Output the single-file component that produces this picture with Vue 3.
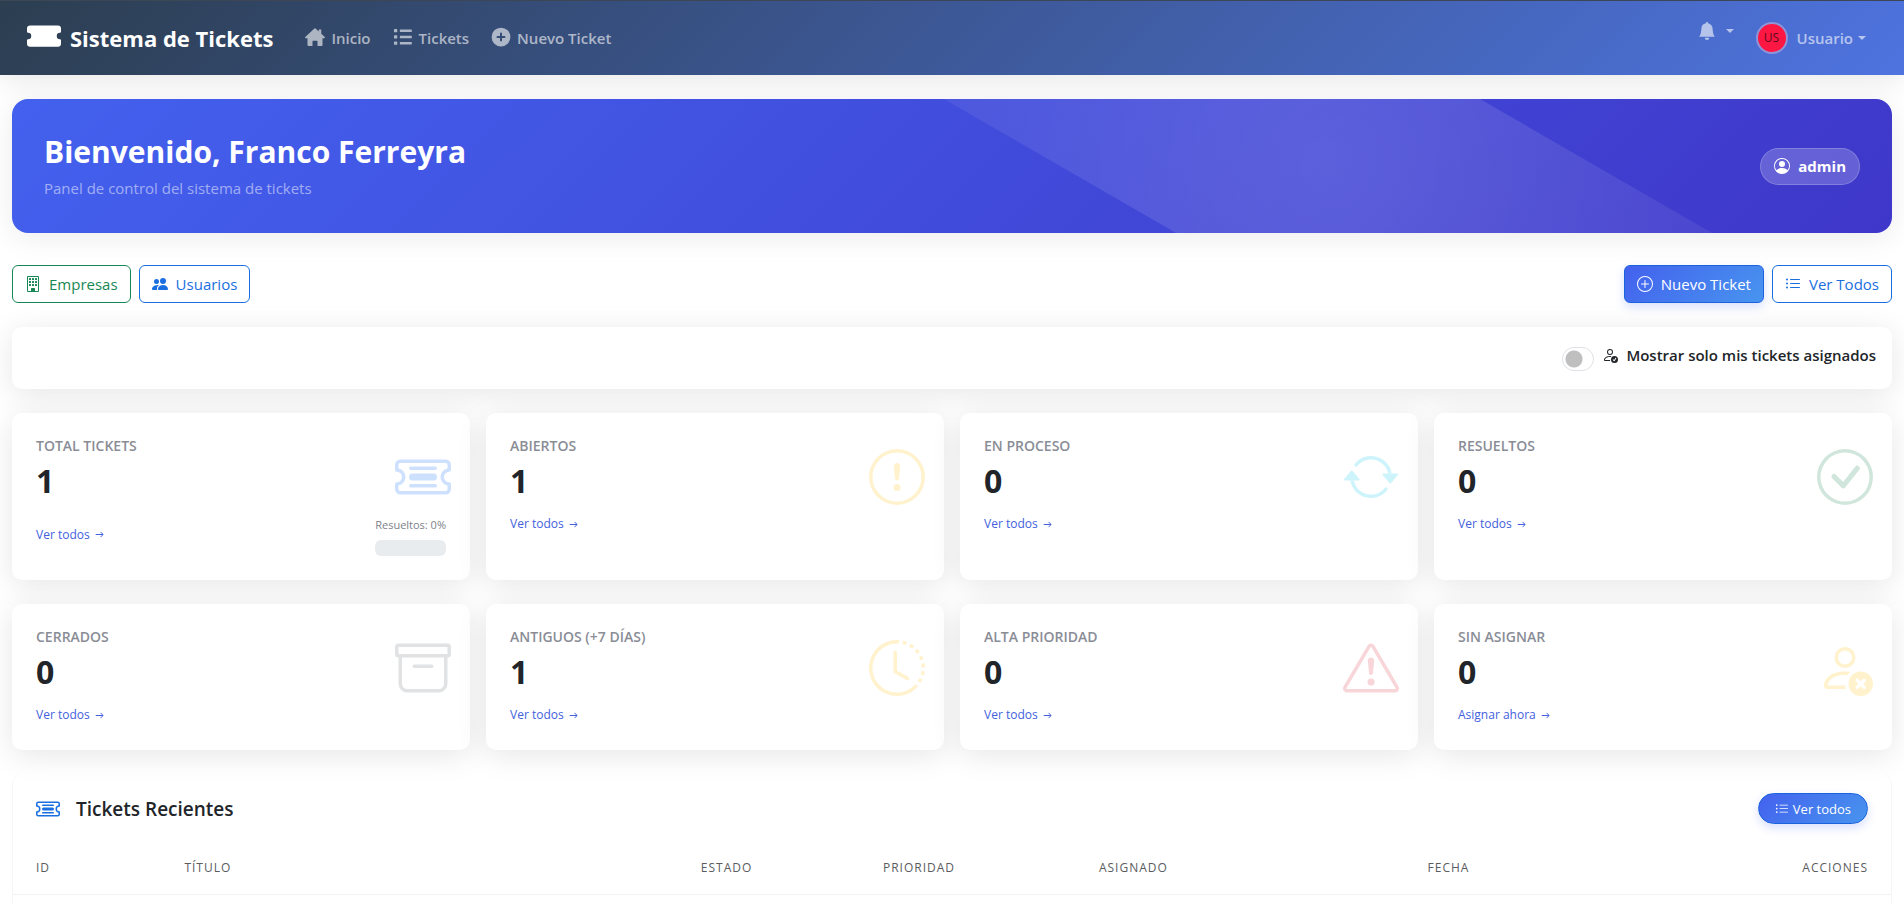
<script setup>
import { h, ref } from 'vue'

const onlyMine = ref(false)

const paths = {
  ticketFill: ['M1.5 3A1.5 1.5 0 0 0 0 4.5V6a.5.5 0 0 0 .5.5 1.5 1.5 0 1 1 0 3 .5.5 0 0 0-.5.5v1.5A1.5 1.5 0 0 0 1.5 13h13a1.5 1.5 0 0 0 1.5-1.5V10a.5.5 0 0 0-.5-.5 1.5 1.5 0 0 1 0-3A.5.5 0 0 0 16 6V4.5A1.5 1.5 0 0 0 14.5 3z'],
  house: ['M7.300 1.300a1 1 0 0 1 1.400 0L11 3.500V2h2v3.400l2.800 2.600a.6.6 0 0 1-.4 1H14v5.300a.8.8 0 0 1-.8.8h-3.200v-3.700a.5.5 0 0 0-.5-.5h-3a.5.5 0 0 0-.5.5v3.700H2.800a.8.8 0 0 1-.8-.8V9H.6a.6.6 0 0 1-.4-1z'],
  listBold: ['M1.300 1.600h1.600a.5.5 0 0 1 .5.5v1.600a.5.5 0 0 1-.5.5H1.300a.5.5 0 0 1-.5-.5V2.100a.5.5 0 0 1 .5-.5M5.500 2h9.500v2H5.500zM1.300 6.600h1.600a.5.5 0 0 1 .5.5v1.600a.5.5 0 0 1-.5.5H1.300a.5.5 0 0 1-.5-.5V7.100a.5.5 0 0 1 .5-.5M5.500 7h9.500v2H5.500zM1.300 11.600h1.600a.5.5 0 0 1 .5.5v1.600a.5.5 0 0 1-.5.5H1.300a.5.5 0 0 1-.5-.5v-1.600a.5.5 0 0 1 .5-.5M5.500 12h9.500v2H5.500z'],
  plusFill: ['M15.500 8A7.500 7.500 0 1 1 .5 8a7.500 7.500 0 0 1 15 0M8.800 5.200a.8.8 0 0 0-1.600 0v2h-2a.8.8 0 0 0 0 1.600h2v2a.8.8 0 0 0 1.600 0v-2h2a.8.8 0 0 0 0-1.600h-2z'],
  bell: ['M8 16a2 2 0 0 0 2-2H6a2 2 0 0 0 2 2m.995-14.901a1 1 0 1 0-1.990 0A5 5 0 0 0 3 6c0 1.098-.5 6-2 7h14c-1.500-1-2-5.902-2-7 0-2.420-1.720-4.440-4.005-4.901'],
  personCircle: ['M11 6a3 3 0 1 1-6 0 3 3 0 0 1 6 0', 'M0 8a8 8 0 1 1 16 0A8 8 0 0 1 0 8m8-7a7 7 0 0 0-5.468 11.370C3.242 11.226 4.805 10 8 10s4.757 1.225 5.468 2.370A7 7 0 0 0 8 1'],
  building: ['M4 2.500a.5.5 0 0 1 .5-.5h1a.5.5 0 0 1 .5.5v1a.5.5 0 0 1-.5.5h-1a.5.5 0 0 1-.5-.5zm3 0a.5.5 0 0 1 .5-.5h1a.5.5 0 0 1 .5.5v1a.5.5 0 0 1-.5.5h-1a.5.5 0 0 1-.5-.5zm3.500-.5a.5.5 0 0 0-.5.5v1a.5.5 0 0 0 .5.5h1a.5.5 0 0 0 .5-.5v-1a.5.5 0 0 0-.5-.5zM4 5.500a.5.5 0 0 1 .5-.5h1a.5.5 0 0 1 .5.5v1a.5.5 0 0 1-.5.5h-1a.5.5 0 0 1-.5-.5zM7.500 5a.5.5 0 0 0-.5.5v1a.5.5 0 0 0 .5.5h1a.5.5 0 0 0 .5-.5v-1a.5.5 0 0 0-.5-.5zm2.500.5a.5.5 0 0 1 .5-.5h1a.5.5 0 0 1 .5.5v1a.5.5 0 0 1-.5.5h-1a.5.5 0 0 1-.5-.5zM4.500 8a.5.5 0 0 0-.5.5v1a.5.5 0 0 0 .5.5h1a.5.5 0 0 0 .5-.5v-1a.5.5 0 0 0-.5-.5zm2.500.5a.5.5 0 0 1 .5-.5h1a.5.5 0 0 1 .5.5v1a.5.5 0 0 1-.5.5h-1a.5.5 0 0 1-.5-.5zm3.500-.5a.5.5 0 0 0-.5.5v1a.5.5 0 0 0 .5.5h1a.5.5 0 0 0 .5-.5v-1a.5.5 0 0 0-.5-.5z', 'M2 1a1 1 0 0 1 1-1h10a1 1 0 0 1 1 1v14a1 1 0 0 1-1 1H3a1 1 0 0 1-1-1zm11 0H3v14h3v-2.500a.5.5 0 0 1 .5-.5h3a.5.5 0 0 1 .5.5V15h3z'],
  people: ['M1 14s-1 0-1-1 1-4 6-4q.7 0 1.300.1C5.500 10 5 11.700 5 13c0 .4.100.7.300 1zM4.500 8a2.500 2.500 0 1 0 0-5 2.500 2.500 0 0 0 0 5', 'M7 14s-1 0-1-1 1-4 5-4 5 3 5 4-1 1-1 1zm4-6a3 3 0 1 0 0-6 3 3 0 0 0 0 6'],
  plusCircle: ['M8 15A7 7 0 1 1 8 1a7 7 0 0 1 0 14m0 1A8 8 0 1 0 8 0a8 8 0 0 0 0 16', 'M8 4a.5.5 0 0 1 .5.5v3h3a.5.5 0 0 1 0 1h-3v3a.5.5 0 0 1-1 0v-3h-3a.5.5 0 0 1 0-1h3v-3A.5.5 0 0 1 8 4'],
  list: ['M5 11.500a.5.5 0 0 1 .5-.5h9a.5.5 0 0 1 0 1h-9a.5.5 0 0 1-.5-.5m0-4a.5.5 0 0 1 .5-.5h9a.5.5 0 0 1 0 1h-9a.5.5 0 0 1-.5-.5m0-4a.5.5 0 0 1 .5-.5h9a.5.5 0 0 1 0 1h-9a.5.5 0 0 1-.5-.5m-3 1a1 1 0 1 0 0-2 1 1 0 0 0 0 2m0 4a1 1 0 1 0 0-2 1 1 0 0 0 0 2m0 4a1 1 0 1 0 0-2 1 1 0 0 0 0 2'],
  personCheck: ['M12.500 16a3.500 3.500 0 1 0 0-7 3.500 3.500 0 0 0 0 7m1.679-4.493-1.335 2.226a.75.75 0 0 1-1.174.144l-.774-.773a.5.5 0 0 1 .708-.708l.547.548 1.170-1.951a.5.5 0 1 1 .858.514M11 5a3 3 0 1 1-6 0 3 3 0 0 1 6 0M8 7a2 2 0 1 0 0-4 2 2 0 0 0 0 4', 'M8.256 14a4.500 4.500 0 0 1-.229-1.004H3c.001-.246.154-.986.832-1.664C4.484 10.680 5.711 10 8 10q.39 0 .74.025c.226-.341.496-.65.804-.918Q8.844 9.002 8 9c-5 0-6 3-6 4s1 1 1 1z'],
  personX: ['M11 5a3 3 0 1 1-6 0 3 3 0 0 1 6 0M8 7a2 2 0 1 0 0-4 2 2 0 0 0 0 4m.256 7a4.500 4.500 0 0 1-.229-1.004H3c.001-.246.154-.986.832-1.664C4.484 10.680 5.711 10 8 10q.39 0 .74.025c.226-.341.496-.65.804-.918Q8.844 9.002 8 9c-5 0-6 3-6 4s1 1 1 1z', 'M12.500 16a3.500 3.500 0 1 0 0-7 3.500 3.500 0 0 0 0 7m-.646-4.854.646.647.646-.647a.5.5 0 0 1 .708.708l-.647.646.647.646a.5.5 0 0 1-.708.708l-.646-.647-.646.647a.5.5 0 0 1-.708-.708l.647-.646-.647-.646a.5.5 0 0 1 .708-.708'],
  ticket: ['M4 5.500a.5.5 0 0 1 .5-.5h7a.5.5 0 0 1 0 1h-7a.5.5 0 0 1-.5-.5m0 5a.5.5 0 0 1 .5-.5h7a.5.5 0 0 1 0 1h-7a.5.5 0 0 1-.5-.5M5 7a1 1 0 0 0 0 2h6a1 1 0 1 0 0-2z', 'M0 4.500A1.500 1.500 0 0 1 1.500 3h13A1.500 1.500 0 0 1 16 4.500V6a.5.5 0 0 1-.5.5 1.500 1.500 0 0 0 0 3 .5.5 0 0 1 .5.5v1.500a1.500 1.500 0 0 1-1.500 1.500h-13A1.500 1.500 0 0 1 0 11.500V10a.5.5 0 0 1 .5-.5 1.500 1.500 0 1 0 0-3A.5.5 0 0 1 0 6zM1.500 4a.5.5 0 0 0-.5.5v1.050a2.500 2.500 0 0 1 0 4.900v1.050a.5.5 0 0 0 .5.5h13a.5.5 0 0 0 .5-.5v-1.050a2.500 2.500 0 0 1 0-4.900V4.500a.5.5 0 0 0-.5-.5z'],
  exclCircle: ['M8 15A7 7 0 1 1 8 1a7 7 0 0 1 0 14m0 1A8 8 0 1 0 8 0a8 8 0 0 0 0 16', 'M7.002 11a1 1 0 1 1 2 0 1 1 0 0 1-2 0M7.100 4.995a.905.905 0 1 1 1.800 0l-.35 3.507a.552.552 0 0 1-1.100 0z'],
  repeat: ['M11.534 7h3.932a.25.25 0 0 1 .192.410l-1.966 2.360a.25.25 0 0 1-.384 0l-1.966-2.360a.25.25 0 0 1 .192-.410m-11 2h3.932a.25.25 0 0 0 .192-.410L2.692 6.230a.25.25 0 0 0-.384 0L.342 8.590A.25.25 0 0 0 .534 9', 'M8 3c-1.552 0-2.940.707-3.857 1.818a.5.5 0 1 1-.771-.636A6.002 6.002 0 0 1 13.917 7H12.900A5 5 0 0 0 8 3M3.100 9a5.002 5.002 0 0 0 8.757 2.182.5.5 0 1 1 .771.636A6.002 6.002 0 0 1 2.083 9z'],
  checkCircle: ['M8 15A7 7 0 1 1 8 1a7 7 0 0 1 0 14m0 1A8 8 0 1 0 8 0a8 8 0 0 0 0 16', 'm10.970 4.970-.02.022-3.473 4.425-2.093-2.094a.75.75 0 0 0-1.060 1.060L6.970 11.030a.75.75 0 0 0 1.079-.02l3.992-4.990a.75.75 0 0 0-1.071-1.050'],
  archive: ['M0 2a1 1 0 0 1 1-1h14a1 1 0 0 1 1 1v2a1 1 0 0 1-1 1v7.500a2.500 2.500 0 0 1-2.500 2.500h-9A2.500 2.500 0 0 1 1 12.500V5a1 1 0 0 1-1-1zm2 3v7.500A1.500 1.500 0 0 0 3.500 14h9a1.500 1.500 0 0 0 1.500-1.500V5zm13-3H1v2h14zM5 7.500a.5.5 0 0 1 .5-.5h5a.5.5 0 0 1 0 1h-5a.5.5 0 0 1-.5-.5'],
  clock: ['M8.515 1.019A7 7 0 0 0 8 1V0a8 8 0 0 1 .589.022zm2.004.450a7 7 0 0 0-.985-.299l.219-.976q.576.129 1.126.342zm1.370.710a7 7 0 0 0-.439-.270l.493-.870a8 8 0 0 1 .979.654l-.615.789a7 7 0 0 0-.418-.302zm1.834 1.790a7 7 0 0 0-.653-.796l.724-.690q.406.429.747.910zm.744 1.352a7 7 0 0 0-.214-.468l.893-.450a8 8 0 0 1 .450 1.088l-.950.313a7 7 0 0 0-.179-.483m.530 2.507a7 7 0 0 0-.100-1.025l.985-.170q.100.580.116 1.170zm-.131 1.538q.050-.254.081-.510l.993.123a8 8 0 0 1-.230 1.155l-.964-.267q.069-.247.120-.501m-.952 2.379q.276-.436.486-.908l.914.405q-.240.540-.555 1.038zm-.964 1.205q.183-.183.350-.378l.758.653a8 8 0 0 1-.401.432z', 'M8 1a7 7 0 1 0 4.950 11.950l.707.707A8.001 8.001 0 1 1 8 0z', 'M7.500 3a.5.5 0 0 1 .5.5v5.210l3.248 1.856a.5.5 0 0 1-.496.868l-3.500-2A.5.5 0 0 1 7 9V3.500a.5.5 0 0 1 .5-.5'],
  triangle: ['M7.938 2.016A.13.13 0 0 1 8.002 2a.13.13 0 0 1 .063.016.15.15 0 0 1 .054.057l6.857 11.667c.036.060.035.124.002.183a.2.2 0 0 1-.054.060.1.1 0 0 1-.066.017H1.146a.1.1 0 0 1-.066-.017.2.2 0 0 1-.054-.060.18.18 0 0 1 .002-.183L7.884 2.073a.15.15 0 0 1 .054-.057m1.044-.450a1.130 1.130 0 0 0-1.960 0L.165 13.233c-.457.778.091 1.767.980 1.767h13.713c.889 0 1.438-.990.980-1.767z', 'M7.002 12a1 1 0 1 1 2 0 1 1 0 0 1-2 0M7.100 5.995a.905.905 0 1 1 1.800 0l-.35 3.507a.552.552 0 0 1-1.100 0z'],
  arrow: ['M1 8a.7.7 0 0 1 .7-.7h11l-2.900-2.900a.7.7 0 0 1 1-1l4.100 4.100a.7.7 0 0 1 0 1l-4.100 4.100a.7.7 0 0 1-1-1l2.900-2.900h-11A.7.7 0 0 1 1 8']
}

const Icon = (props) =>
  h('svg', { viewBox: '0 0 16 16', fill: 'currentColor', 'fill-rule': 'evenodd', 'aria-hidden': 'true' },
    paths[props.name].map((d) => h('path', { d })))
Icon.props = ['name']

const stats = [
  { label: 'Total Tickets', value: 1, link: 'Ver todos', icon: 'ticket', tone: 'blue', solved: 0 },
  { label: 'Abiertos', value: 1, link: 'Ver todos', icon: 'exclCircle', tone: 'yellow' },
  { label: 'En Proceso', value: 0, link: 'Ver todos', icon: 'repeat', tone: 'cyan' },
  { label: 'Resueltos', value: 0, link: 'Ver todos', icon: 'checkCircle', tone: 'green' },
  { label: 'Cerrados', value: 0, link: 'Ver todos', icon: 'archive', tone: 'gray' },
  { label: 'Antiguos (+7 días)', value: 1, link: 'Ver todos', icon: 'clock', tone: 'yellow' },
  { label: 'Alta Prioridad', value: 0, link: 'Ver todos', icon: 'triangle', tone: 'red' },
  { label: 'Sin Asignar', value: 0, link: 'Asignar ahora', icon: 'personX', tone: 'yellow' }
]
</script>

<template>
  <div class="page">
    <header class="navbar">
      <a href="#" class="brand"><Icon name="ticketFill" class="brand-icon" /><span>Sistema de Tickets</span></a>
      <nav class="links">
        <a href="#"><Icon name="house" class="nav-icon" />Inicio</a>
        <a href="#"><Icon name="listBold" class="nav-icon" />Tickets</a>
        <a href="#"><Icon name="plusFill" class="nav-icon" />Nuevo Ticket</a>
      </nav>
      <button type="button" class="bell" aria-label="Notificaciones"><Icon name="bell" class="bell-icon" /><i class="caret"></i></button>
      <button type="button" class="user"><span class="avatar">US</span><span>Usuario</span><i class="caret"></i></button>
    </header>

    <main class="content">
      <section class="hero">
        <div class="hero-text">
          <h1>Bienvenido, Franco Ferreyra</h1>
          <p>Panel de control del sistema de tickets</p>
        </div>
        <span class="role"><Icon name="personCircle" class="icon" />admin</span>
      </section>

      <div class="actions">
        <a href="#" class="btn outline-green"><Icon name="building" class="icon" />Empresas</a>
        <a href="#" class="btn outline-blue"><Icon name="people" class="icon" />Usuarios</a>
        <span class="spacer"></span>
        <a href="#" class="btn primary"><Icon name="plusCircle" class="icon" />Nuevo Ticket</a>
        <a href="#" class="btn outline-blue"><Icon name="list" class="icon" />Ver Todos</a>
      </div>

      <section class="card filter">
        <input id="only-mine" v-model="onlyMine" type="checkbox" role="switch" class="switch">
        <label for="only-mine"><Icon name="personCheck" class="icon" />Mostrar solo mis tickets asignados</label>
      </section>

      <section class="stats">
        <article v-for="s in stats" :key="s.label" class="card stat">
          <h2>{{ s.label }}</h2>
          <p class="value">{{ s.value }}</p>
          <div class="stat-foot">
            <a href="#">{{ s.link }}<Icon name="arrow" class="arrow" /></a>
            <div v-if="s.solved !== undefined" class="solved">
              <small>Resueltos: {{ s.solved }}%</small>
              <div class="bar"><div class="bar-fill" :style="{ width: s.solved + '%' }"></div></div>
            </div>
          </div>
          <Icon :name="s.icon" class="stat-icon" :class="s.tone" />
        </article>
      </section>

      <section class="recent">
        <div class="recent-head">
          <Icon name="ticket" class="recent-icon" />
          <h2>Tickets Recientes</h2>
          <a href="#" class="pill"><Icon name="list" class="pill-icon" />Ver todos</a>
        </div>
        <table>
          <thead>
            <tr>
              <th class="c-id">ID</th>
              <th class="c-title">Título</th>
              <th class="c-state">Estado</th>
              <th class="c-prio">Prioridad</th>
              <th class="c-user">Asignado</th>
              <th class="c-date">Fecha</th>
              <th class="c-actions">Acciones</th>
            </tr>
          </thead>
        </table>
      </section>
    </main>
  </div>
</template>

<style>
body { margin: 0; background: #fff; }
</style>

<style scoped>
* { box-sizing: border-box; }
.page {
  min-height: 100vh;
  display: flex;
  flex-direction: column;
  font-family: "Open Sans", "Noto Sans", sans-serif;
  font-size: 15px;
  line-height: 24px;
  color: #212529;
}
h1, h2, p { margin: 0; }
a { text-decoration: none; color: inherit; }
svg { flex: none; display: block; }
.icon { width: 16px; height: 16px; }

.navbar {
  height: 75px;
  padding: 0 38px 0 27px;
  display: flex;
  align-items: center;
  border-top: 1px solid #3d4654;
  background: linear-gradient(135deg, #2c3e50, #4e73df);
  box-shadow: 0 4px 30px rgba(0, 0, 0, .1);
  color: #fff;
}
.brand { display: flex; align-items: center; gap: 9px; font-size: 22px; font-weight: 700; }
.brand-icon { width: 34px; height: 34px; margin-bottom: 4px; }
.links { display: flex; gap: 22px; margin-left: 32px; flex: 1; font-weight: 600; color: rgba(255, 255, 255, .6); }
.links a { display: flex; align-items: center; gap: 6px; }
.nav-icon { width: 20px; height: 20px; margin-bottom: 2px; }
.navbar button { border: 0; padding: 0; background: none; font: inherit; font-weight: 600; color: rgba(255, 255, 255, .6); display: flex; align-items: center; }
.navbar .bell { gap: 10px; margin: 0 22px 14px 0; }
.bell-icon { width: 18px; height: 18px; }
.caret { border: 4px solid transparent; border-top-color: currentColor; border-bottom: 0; }
.user .caret { margin-left: 5px; }
.avatar {
  width: 32px;
  height: 32px;
  margin-right: 9px;
  border: 2px solid #8f95d8;
  border-radius: 50%;
  background: #ff1744;
  color: #5c0a1c;
  font-size: 12px;
  font-weight: 400;
  line-height: 28px;
  text-align: center;
}

.content { flex: 1; display: flex; flex-direction: column; padding: 24px 12px 0; }

.hero {
  position: relative;
  overflow: hidden;
  height: 134px;
  padding: 0 32px;
  display: flex;
  align-items: center;
  justify-content: space-between;
  border-radius: 16px;
  background: linear-gradient(135deg, #4361ee, #3f37c9);
  box-shadow: 0 5px 30px rgba(0, 0, 0, .08);
  color: #fff;
}
.hero::before {
  content: "";
  position: absolute;
  top: -50%;
  right: -20%;
  width: 100%;
  height: 200%;
  transform: rotate(30deg);
  background: radial-gradient(circle, rgba(255, 255, 255, .15), rgba(255, 255, 255, 0) 70%);
}
.hero h1 { font-size: 30px; line-height: 40px; font-weight: 700; }
.hero p { margin-top: 4px; color: rgba(255, 255, 255, .5); }
.role {
  position: relative;
  display: flex;
  align-items: center;
  gap: 8px;
  height: 37px;
  padding: 0 13px;
  border: 1px solid rgba(255, 255, 255, .2);
  border-radius: 19px;
  background: rgba(255, 255, 255, .2);
  font-weight: 700;
}

.actions { display: flex; gap: 8px; margin-top: 32px; }
.spacer { flex: 1; }
.btn {
  height: 38px;
  padding: 0 12px;
  display: flex;
  align-items: center;
  gap: 8px;
  border: 1px solid;
  border-radius: 6px;
}
.outline-green { color: #198754; }
.outline-blue { color: #1a6fe0; }
.primary { border-color: #1b62dd; color: #fff; background: linear-gradient(135deg, #4361ee, #4895ef); box-shadow: 0 4px 10px rgba(67, 97, 238, .2); }

.card { background: #fff; border-radius: 10px; box-shadow: 0 5px 30px rgba(0, 0, 0, .1); }
.filter {
  height: 62px;
  margin-top: 24px;
  padding: 0 16px;
  display: flex;
  align-items: center;
  justify-content: flex-end;
  gap: 8px;
}
.switch {
  appearance: none;
  width: 32px;
  height: 24px;
  margin: 2px 0 0;
  border: 1px solid #dee2e6;
  border-radius: 12px;
  background: radial-gradient(circle at 11px 11px, #bfbfbf 8px, transparent 9px);
}
.switch:checked { background: radial-gradient(circle at 19px 11px, #4361ee 8px, transparent 9px); }
.filter label { display: flex; align-items: center; gap: 8px; margin-bottom: 6px; font-weight: 600; }

.stats { display: grid; grid-template-columns: repeat(4, 1fr); gap: 24px 16px; margin-top: 24px; }
.stat { position: relative; padding: 24px; }
.stat h2 { font-size: 14px; line-height: 18px; font-weight: 600; text-transform: uppercase; color: #8a8d96; }
.value { margin-top: 6px; font-size: 32px; line-height: 40px; font-weight: 700; }
.stat-foot { display: flex; align-items: center; justify-content: space-between; margin-top: 12px; min-height: 22px; font-size: 12px; line-height: 20px; }
.stat-foot a { display: flex; align-items: center; gap: 5px; color: #4361dd; }
.arrow { width: 9px; height: 9px; }
.solved { display: flex; flex-direction: column; gap: 4px; }
.solved small { font-size: 11px; line-height: 23px; color: #7d828a; }
.bar { height: 16px; border-radius: 6px; background: #e9ecef; overflow: hidden; }
.bar-fill { height: 100%; background: #198754; }
.stat-icon { position: absolute; right: 19px; top: 36px; width: 56px; height: 56px; opacity: .2; }
.blue { color: #0d6efd; }
.yellow { color: #ffc107; }
.cyan { color: #0dcaf0; }
.green { color: #198754; }
.gray { color: #6c757d; }
.red { color: #dc3545; }

.recent { flex: 1; margin-top: 24px; border: 1px solid #f6f6f7; border-width: 0 1px; border-radius: 10px 10px 0 0; background: #fff; }
.recent-head { display: flex; align-items: center; gap: 16px; height: 69px; padding: 0 23px; }
.recent-head h2 { flex: 1; font-size: 19px; font-weight: 600; }
.recent-icon { width: 24px; height: 24px; color: #1a6fe0; }
.pill {
  display: flex;
  align-items: center;
  gap: 4px;
  height: 31px;
  padding: 0 16px;
  border: 1px solid #1b62dd;
  border-radius: 16px;
  font-size: 13px;
  color: #fff;
  background: linear-gradient(135deg, #4361ee, #4895ef);
  box-shadow: 0 4px 10px rgba(67, 97, 238, .2);
}
.pill-icon { width: 14px; height: 14px; }
table { width: 100%; border-collapse: collapse; table-layout: fixed; }
th { height: 51px; padding: 0 8px; border-bottom: 1px solid #f1f2f3; text-align: left; font-size: 12px; font-weight: 500; letter-spacing: 1px; text-transform: uppercase; color: #5a5c60; }
th.c-id { width: 8.7%; padding-left: 23px; }
.c-title { width: 27.5%; }
.c-state { width: 9.7%; }
.c-prio { width: 11.5%; }
.c-user { width: 17.5%; }
th.c-actions { padding-right: 23px; text-align: right; }
</style>
